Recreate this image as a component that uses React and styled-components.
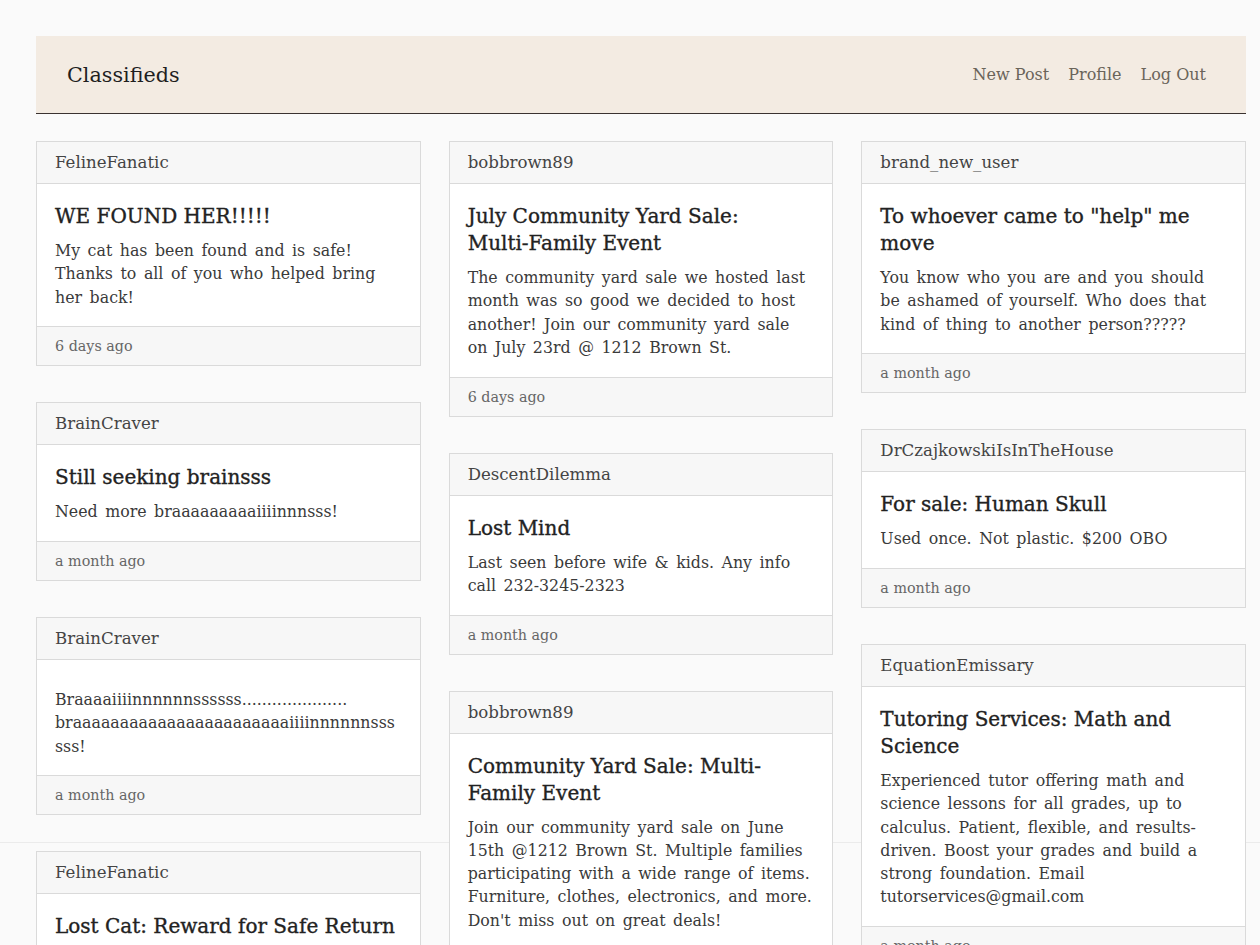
import styled, { createGlobalStyle } from 'styled-components';

// global: page reset, font and the faint rule near the bottom
const GlobalStyle = createGlobalStyle`
  body {
    margin: 0;
    background: linear-gradient(
      to bottom,
      #fafafa 842px,
      #ebebeb 842px,
      #ebebeb 843px,
      #fafafa 843px
    ) no-repeat #fafafa;
    font-family: 'DejaVu Serif', 'Liberation Serif', serif;
    color: #333;
  }
`;

const posts = [
  [
    {
      user: 'FelineFanatic',
      title: 'WE FOUND HER!!!!!',
      body: 'My cat has been found and is safe! Thanks to all of you who helped bring her back!',
      ago: '6 days ago',
    },
    {
      user: 'BrainCraver',
      title: 'Still seeking brainsss',
      body: 'Need more braaaaaaaaaiiiinnnsss!',
      ago: 'a month ago',
    },
    {
      user: 'BrainCraver',
      title: '',
      body: 'Braaaaiiiinnnnnnssssss..................... braaaaaaaaaaaaaaaaaaaaaaaiiiinnnnnnssssss!',
      ago: 'a month ago',
    },
    {
      user: 'FelineFanatic',
      title: 'Lost Cat: Reward for Safe Return',
      body: 'My beloved cat went missing near Elm Park. She is grey with white paws and answers to Luna. Reward offered for her safe return!',
      ago: '8 days ago',
    },
  ],
  [
    {
      user: 'bobbrown89',
      title: 'July Community Yard Sale: Multi-\u2060Family Event',
      body: 'The community yard sale we hosted last month was so good we decided to host another! Join our community yard sale on July 23rd @ 1212 Brown St.',
      ago: '6 days ago',
    },
    {
      user: 'DescentDilemma',
      title: 'Lost Mind',
      body: 'Last seen before wife & kids. Any info call 232-3245-2323',
      ago: 'a month ago',
    },
    {
      user: 'bobbrown89',
      title: 'Community Yard Sale: Multi-Family Event',
      body: "Join our community yard sale on June 15th @1212 Brown St. Multiple families participating with a wide range of items. Furniture, clothes, electronics, and more. Don't miss out on great deals!",
      ago: 'a month ago',
    },
  ],
  [
    {
      user: 'brand_new_user',
      title: 'To whoever came to "help" me move',
      body: 'You know who you are and you should be ashamed of yourself. Who does that kind of thing to another person?????',
      ago: 'a month ago',
    },
    {
      user: 'DrCzajkowskiIsInTheHouse',
      title: 'For sale: Human Skull',
      body: 'Used once. Not plastic. $200 OBO',
      ago: 'a month ago',
    },
    {
      user: 'EquationEmissary',
      title: 'Tutoring Services: Math and Science',
      body: 'Experienced tutor offering math and science lessons for all grades, up to calculus. Patient, flexible, and results-driven. Boost your grades and build a strong foundation. Email tutorservices@gmail.com',
      ago: 'a month ago',
    },
  ],
];

const Page = styled.div`
  padding: 36px 14px 40px 36px;
`;

const NavBar = styled.header`
  display: flex;
  align-items: center;
  justify-content: space-between;
  height: 77px;
  padding: 0 40px 0 31px;
  background: #f3ebe2;
  border-bottom: 1px solid #3a3230;
`;

const Brand = styled.div`
  font-size: 20.7px;
  color: #1f1f1f;
`;

const NavLinks = styled.nav`
  display: flex;
  gap: 19px;
`;

const NavLink = styled.a`
  font-size: 16px;
  color: #6a645a;
  text-decoration: none;
  cursor: pointer;
`;

const Board = styled.main`
  display: grid;
  grid-template-columns: repeat(3, 1fr);
  gap: 28px;
  align-items: start;
  margin-top: 27px;
`;

const Column = styled.div`
  display: flex;
  flex-direction: column;
  gap: 36px;
`;

const Card = styled.article`
  background: #fff;
  border: 1px solid #dadada;
`;

const CardHeader = styled.div`
  height: 41px;
  display: flex;
  align-items: center;
  padding: 0 18px;
  background: #f7f7f7;
  border-bottom: 1px solid #dadada;
  font-size: 16.6px;
  color: #444;
`;

const CardBody = styled.div`
  padding: 19px 18px 17.4px;
`;

const Title = styled.h2`
  margin: 0 0 9px;
  font-size: 20px;
  line-height: 27px;
  font-weight: 400;
  color: #222;
  -webkit-text-stroke: 0.35px #222;
`;

const Text = styled.p`
  margin: 0;
  font-size: 15.8px;
  line-height: 23.3px;
  word-spacing: 2.5px;
  color: #3a3a3a;
  overflow-wrap: anywhere;
`;

const CardFooter = styled.div`
  height: 38px;
  display: flex;
  align-items: center;
  padding: 0 18px;
  background: #f7f7f7;
  border-top: 1px solid #dadada;
  font-size: 14.3px;
  color: #666;
`;

const PostCard = ({ post }) => (
  <Card>
    <CardHeader>{post.user}</CardHeader>
    <CardBody>
      <Title>{post.title}</Title>
      <Text>{post.body}</Text>
    </CardBody>
    <CardFooter>{post.ago}</CardFooter>
  </Card>
);

const App = () => (
  <>
    <GlobalStyle />
    <Page>
      <NavBar>
        <Brand>Classifieds</Brand>
        <NavLinks>
          <NavLink>New Post</NavLink>
          <NavLink>Profile</NavLink>
          <NavLink>Log Out</NavLink>
        </NavLinks>
      </NavBar>
      <Board>
        {posts.map((col, i) => (
          <Column key={i}>
            {col.map((post, j) => (
              <PostCard key={j} post={post} />
            ))}
          </Column>
        ))}
      </Board>
    </Page>
  </>
);

export default App;
